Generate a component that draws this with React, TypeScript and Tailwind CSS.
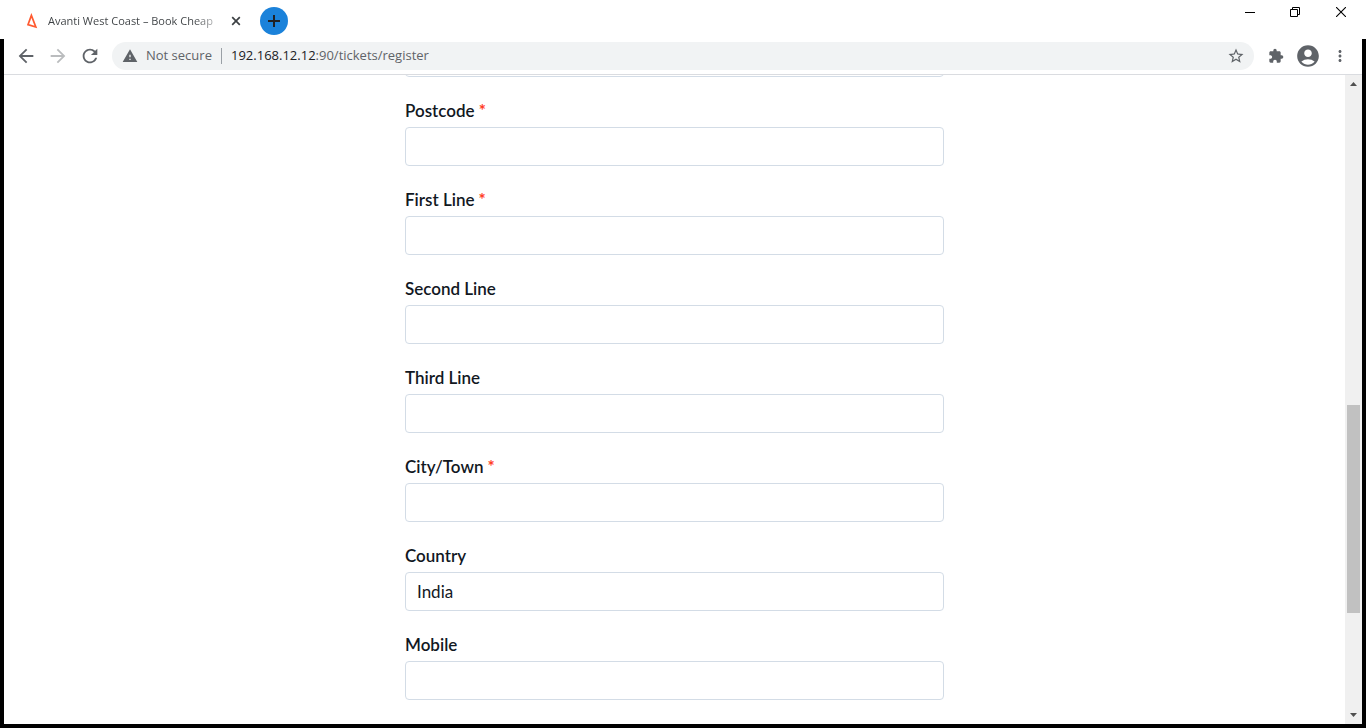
import {
  MdAccountCircle,
  MdArrowBack,
  MdArrowForward,
  MdExtension,
  MdMoreVert,
  MdRefresh,
  MdStarBorder,
  MdWarning,
} from "react-icons/md";

type Field = { id: string; label: string; required?: boolean; value?: string };

const fields: Field[] = [
  { id: "postcode", label: "Postcode", required: true },
  { id: "first-line", label: "First Line", required: true },
  { id: "second-line", label: "Second Line" },
  { id: "third-line", label: "Third Line" },
  { id: "city", label: "City/Town", required: true },
  { id: "country", label: "Country", value: "India" },
  { id: "mobile", label: "Mobile" },
];

const inputClass =
  "block h-[39px] w-full rounded border border-[#d3dce6] bg-white px-[11px] text-[17px] text-[#12181f] outline-none focus:border-[#7a93ac]";

function TabStrip() {
  return (
    <header className="flex h-[39px] shrink-0 items-start justify-between bg-white">
      <div className="flex items-center pt-[7px] pl-6">
        <svg viewBox="0 0 16 16" className="mr-2 h-4 w-4" aria-hidden="true">
          <path
            d="M7.4 2.4 4 11.6 11.8 14Z"
            fill="none"
            stroke="#ff5a30"
            strokeWidth="1.7"
            strokeLinejoin="miter"
          />
        </svg>
        <span className="w-[172px] bg-gradient-to-r from-[#3c4043] from-85% to-[#3c404333] bg-clip-text text-[11px] whitespace-nowrap text-transparent">
          Avanti West Coast – Book Cheap
        </span>
        <button type="button" aria-label="Close tab" className="flex h-4 w-8 items-center justify-center">
          <svg viewBox="0 0 10 10" className="h-[10px] w-[10px]" aria-hidden="true">
            <path d="M1.2 1.2 8.8 8.8M8.8 1.2 1.2 8.8" stroke="#3c4043" strokeWidth="1.7" />
          </svg>
        </button>
        <button
          type="button"
          aria-label="New tab"
          className="ml-2 flex h-7 w-7 items-center justify-center rounded-full bg-[#1b82da]"
        >
          <svg viewBox="0 0 12 12" className="h-3 w-3" aria-hidden="true">
            <path d="M6 0V12M0 6H12" stroke="#202124" strokeWidth="2" />
          </svg>
        </button>
      </div>
      <div className="flex pr-[2px]">
        <button type="button" aria-label="Minimize" className="flex h-6 w-11 items-center justify-center">
          <svg viewBox="0 0 10 10" className="h-[10px] w-[10px]" aria-hidden="true">
            <path d="M0 5.5H10" stroke="#000" />
          </svg>
        </button>
        <button type="button" aria-label="Restore" className="flex h-6 w-[46px] items-center justify-center">
          <svg viewBox="0 0 10 10" className="h-[10px] w-[10px]" fill="none" stroke="#000" aria-hidden="true">
            <path d="M.5 2.5H7.5V9.5H.5ZM2.5 2.5V.5H9.5V7.5H7.5" />
          </svg>
        </button>
        <button type="button" aria-label="Close window" className="flex h-6 w-[46px] items-center justify-center">
          <svg viewBox="0 0 10 10" className="h-[10px] w-[10px]" aria-hidden="true">
            <path d="M0 0 10 10M10 0 0 10" stroke="#000" strokeWidth="1.1" />
          </svg>
        </button>
      </div>
    </header>
  );
}

function Toolbar() {
  return (
    <nav className="flex h-9 shrink-0 items-center border-b border-[#dadce0] bg-white pb-px text-[#5f6368]">
      <div className="flex w-[108px] items-center pl-[6px]">
        <button type="button" aria-label="Back" className="flex w-8 justify-center">
          <MdArrowBack size={22} />
        </button>
        <button type="button" aria-label="Forward" className="flex w-8 justify-center text-[#babcbe]">
          <MdArrowForward size={22} />
        </button>
        <button type="button" aria-label="Reload" className="flex w-8 justify-center">
          <MdRefresh size={22} />
        </button>
      </div>
      <div className="flex h-7 flex-1 items-center rounded-full bg-[#f1f3f4] pr-[9px] pl-[10px] text-[13px]">
        <button type="button" className="flex w-[99px] items-center gap-2">
          <MdWarning size={16} className="shrink-0" />
          <span className="whitespace-nowrap">Not secure</span>
        </button>
        <span className="h-4 w-px bg-[#9aa0a6]" />
        <a href="#register" className="flex-1 pl-[9px] whitespace-nowrap">
          <span className="text-[#202124]">192.168.12.12</span>:90/tickets/register
        </a>
        <button type="button" aria-label="Bookmark this page">
          <MdStarBorder size={18} />
        </button>
      </div>
      <div className="flex w-[108px] items-center pl-[6px]">
        <button type="button" aria-label="Extensions" className="flex w-8 justify-center">
          <MdExtension size={16} />
        </button>
        <button type="button" aria-label="Profile" className="flex w-8 justify-center">
          <MdAccountCircle size={26} />
        </button>
        <button type="button" aria-label="Menu" className="flex w-8 justify-center">
          <MdMoreVert size={18} />
        </button>
      </div>
    </nav>
  );
}

function Scrollbar() {
  return (
    <div className="flex w-[17px] shrink-0 flex-col items-center bg-[#f0f0f0]" aria-hidden="true">
      <svg viewBox="0 0 17 17" className="h-[17px] w-[17px] shrink-0">
        <path d="M5 11 8.5 7 12 11Z" fill="#505050" />
      </svg>
      <div className="flex w-full flex-1 flex-col items-center">
        <div className="grow-[313]" />
        <div className="w-[13px] grow-[208] bg-[#c1c1c1]" />
        <div className="grow-[94]" />
      </div>
      <svg viewBox="0 0 17 17" className="h-[17px] w-[17px] shrink-0">
        <path d="M5 6 8.5 10 12 6Z" fill="#505050" />
      </svg>
    </div>
  );
}

export default function App() {
  return (
    <div className="flex h-screen flex-col bg-white font-['Open_Sans','Noto_Sans',sans-serif]">
      <TabStrip />
      <div className="flex min-h-0 flex-1 flex-col border-x-4 border-b-4 border-black">
        <Toolbar />
        <div className="flex min-h-0 flex-1">
          <main className="min-w-0 flex-1 overflow-hidden font-[Lato,sans-serif]">
            <form className="mx-auto -mt-[37px] flex w-full max-w-[539px] flex-col gap-[22px]">
              <input type="text" aria-label="Address" className={inputClass} />
              {fields.map((f) => (
                <div key={f.id}>
                  <label htmlFor={f.id} className="mb-1 block text-[17px] leading-6 font-semibold text-[#12181f]">
                    {f.label}
                    {f.required && <span className="font-bold text-[#ff3b1f]"> *</span>}
                  </label>
                  <input id={f.id} type="text" defaultValue={f.value} className={inputClass} />
                </div>
              ))}
            </form>
          </main>
          <Scrollbar />
        </div>
      </div>
    </div>
  );
}
